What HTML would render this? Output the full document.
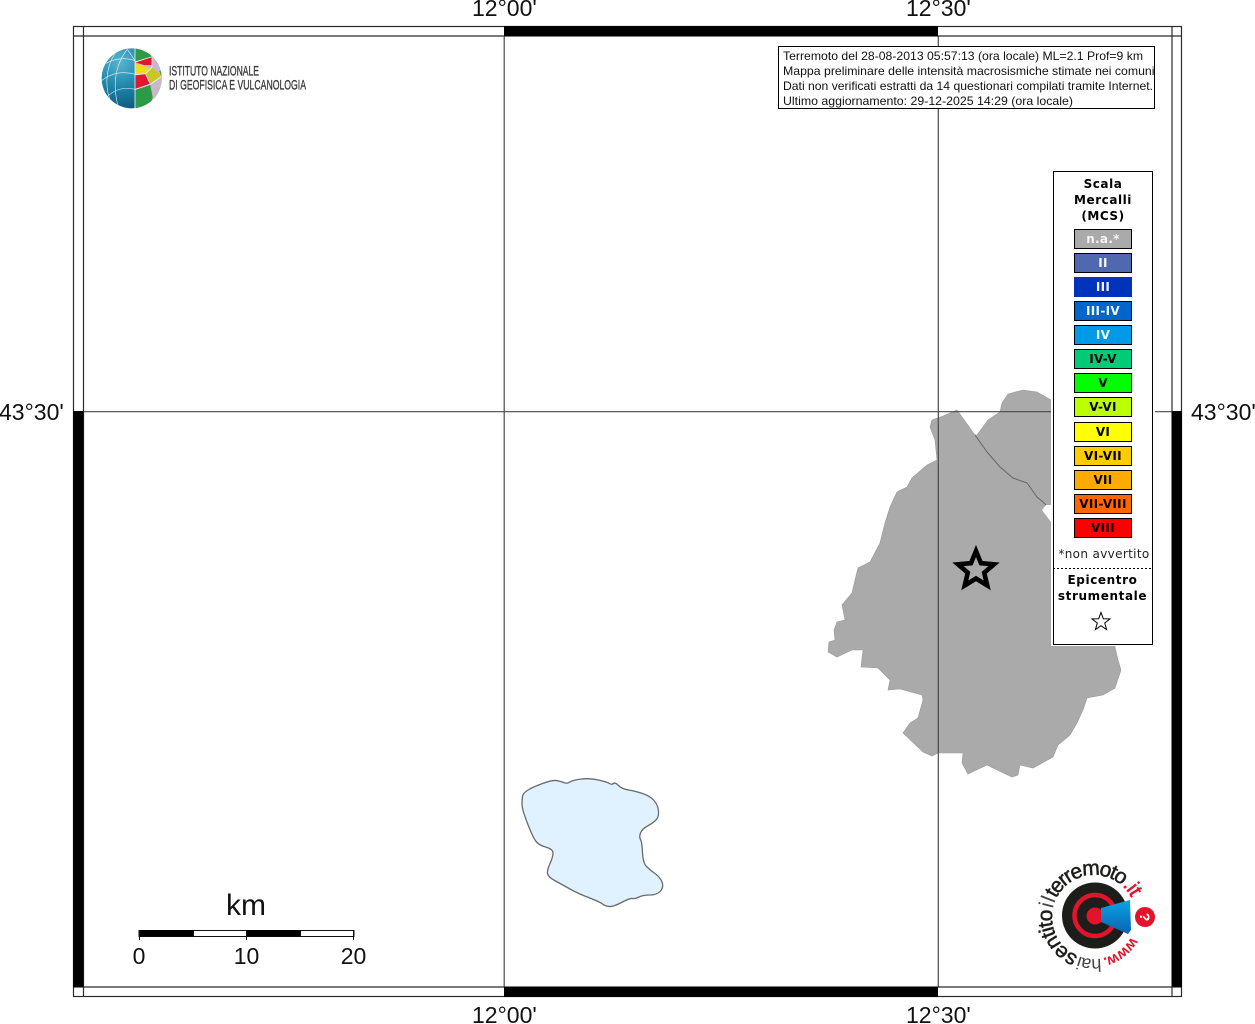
<!DOCTYPE html>
<html>
<head>
<meta charset="utf-8">
<title>Mappa intensità macrosismiche</title>
<style>
html,body{margin:0;padding:0;background:#fff;width:1255px;height:1024px;overflow:hidden}
svg{display:block}
.lab{font-family:"Liberation Sans",sans-serif;font-size:23px;fill:#111}
.box{font-family:"Liberation Sans",sans-serif;font-size:12px;fill:#111}
.leg{font-family:"DejaVu Sans",sans-serif;font-size:12px;font-weight:bold;fill:#000;text-anchor:middle;letter-spacing:.55px}
.sw{font-family:"DejaVu Sans",sans-serif;font-size:12px;font-weight:bold;text-anchor:middle;letter-spacing:.3px}
</style>
</head>
<body>
<svg width="1255" height="1024" viewBox="0 0 1255 1024" xmlns="http://www.w3.org/2000/svg">
<defs>
<radialGradient id="glb" cx="30%" cy="22%" r="85%">
<stop offset="0" stop-color="#5ab6d0"/><stop offset=".5" stop-color="#1f86aa"/><stop offset="1" stop-color="#0b5578"/>
</radialGradient>
<linearGradient id="cone" x1="0" y1="0" x2="0" y2="1">
<stop offset="0" stop-color="#0aa4e6"/><stop offset="1" stop-color="#0a62b2"/>
</linearGradient>
<clipPath id="gc"><circle cx="125" cy="115" r="90"/></clipPath>
<clipPath id="boxclip"><rect x="779" y="47" width="376" height="61"/></clipPath>
<path id="arc" d="M1136 917A42 42 0 1 1 1052 917A42 42 0 1 1 1136 917"/>
</defs>

<!-- regions -->
<path fill="#aaaaaa" stroke="#999" stroke-width=".6" d="M957 410L975 435L977 435L988 420L1000 412L1002 403L1008 394L1023 390L1037 392L1051 400L1060 410L1060 640L1115 640L1115 647L1118 660L1121 670L1115 688L1103 695L1087 698L1083 710L1077 723L1070 735L1058 745L1053 757L1033 768L1020 765L1018 775L1012 777L993 768L987 765L968 774L962 763L963 753L953 753L938 753L932 756L923 752L903 733L910 723L918 718L923 700L922 695L900 689L888 690L890 680L878 668L861 667L863 650L852 650L837 657L828 652L829 642L835 640L834 630L837 622L845 620L842 605L852 593L855 580L858 568L870 562L880 543L885 523L890 507L897 492L907 487L912 478L927 465L937 460L935 440L930 427L932 420L943 416Z"/>
<path fill="#fff" d="M1046 505L1042 510L1051 522L1056 522L1056 505Z"/>
<path fill="none" stroke="#666" stroke-width="1" d="M975 435L987 452L1000 467L1013 478L1027 483L1037 497L1043 502L1046 505"/>

<!-- lake -->
<path fill="#e0f2ff" stroke="#6a6a6a" stroke-width="1.300" stroke-linejoin="round" d="M522 803.500Q522 800 522.500 796.500Q523 793 528 790Q533 787 542.500 783.500Q552 780 556 780.500Q560 781 563.500 782.500Q567 784 570 782Q573 780 581.500 779Q590 778 598.500 780Q607 782 609.500 783.500Q612 785 613.500 783.500Q615 782 618.500 785.500Q622 789 628.500 790Q635 791 642.500 793.500Q650 796 654 800.500Q658 805 658.500 811Q659 817 656 820Q653 823 647.500 826Q642 829 640.500 833Q639 837 640.500 839.500Q642 842 642.500 852.500Q643 863 646.500 866.500Q650 870 655 873.500Q660 877 662 882Q664 887 660.500 891Q657 895 650 895Q643 895 639 897Q635 899 632.500 898.500Q630 898 621.500 902.500Q613 907 609 906.500Q605 906 602.500 904Q600 902 588.500 897.500Q577 893 570 889Q563 885 555.500 881Q548 877 547.500 873.500Q547 870 550 863.500Q553 857 553 853Q553 849 545.500 847Q538 845 535 840Q532 835 528.500 826Q525 817 523.500 812Q522 807 522 803.500Z"/>

<!-- grid -->
<g stroke="#4a4a4a" stroke-width="1.200" fill="none">
<path d="M504.200 36V987M938.300 36V987M83 411.700H1172"/>
</g>

<!-- frame -->
<g fill="none" stroke="#2a2a2a" stroke-width="1.200">
<rect x="73.500" y="26.500" width="1108" height="970"/>
<path d="M83.500 26V997M1172 26V997M73 36H1182M73 987H1182"/>
</g>
<g fill="#000">
<rect x="504" y="26" width="434" height="10"/>
<rect x="504" y="987" width="434" height="10"/>
<rect x="73" y="411" width="10.500" height="576"/>
<rect x="1172" y="411" width="10" height="576"/>
</g>

<!-- axis labels -->
<text class="lab" x="472" y="16">12°00'</text>
<text class="lab" x="906" y="16">12°30'</text>
<text class="lab" x="472" y="1023">12°00'</text>
<text class="lab" x="906" y="1023">12°30'</text>
<text class="lab" x="-1" y="420">43°30'</text>
<text class="lab" x="1191" y="420">43°30'</text>

<!-- epicentre star -->
<polygon points="976,551 981,563.200 994,564.300 984.200,572.700 987.200,585.400 976,578.500 964.800,585.400 967.800,572.700 958,564.300 971,563.200" fill="#aaaaaa" stroke="#000" stroke-width="4.600" stroke-linejoin="miter"/>

<!-- INGV logo -->
<g transform="translate(90 40) scale(.33333)">
<circle cx="125" cy="115" r="90" fill="url(#glb)"/>
<g clip-path="url(#gc)">
<path fill="#c9b8cc" d="M135 20H220V210H135Z"/>
<path fill="#2d9a45" d="M135 64L136 20L190 20L190 50Z"/>
<path fill="#e2162f" d="M136 67L186 51L187 75L162 75Z"/>
<path fill="#f0dc1e" d="M136 70L160 77L178 84L166 101L136 103Z"/>
<path fill="#c8c820" d="M166 100L186 82L216 108L184 130Z"/>
<path fill="#e2162f" d="M135 106L167 102L181 131L135 147Z"/>
<path fill="#2d9a45" d="M135 150L181 135L188 172L172 215L135 215Z"/>
<path fill="#2d9a45" d="M207 92L220 96L216 112Z"/>
</g>
<g fill="none" stroke="#e6f4f8" stroke-width="1.800" clip-path="url(#gc)">
<path d="M135 22V208" stroke-width="2.500"/>
<path d="M135 62C100 50 70 58 48 70"/>
<path d="M135 103C95 92 62 100 35 122"/>
<path d="M135 148C100 140 72 150 52 170"/>
<path d="M112 28C78 70 66 130 84 198"/>
<path d="M82 32C50 70 42 130 60 180"/>
<path d="M112 28L135 62"/>
</g>
<g fill="none" stroke="#fff" stroke-width="2" clip-path="url(#gc)">
<path d="M136 66L186 50M136 104L167 101L186 82M166 101L181 133L135 148M181 133L216 108M186 50L186 82"/>
</g>
</g>
<g font-family="Liberation Sans,sans-serif" font-size="14" fill="#3a3a3a" stroke="#3a3a3a" stroke-width=".35">
<text x="169" y="75.500" textLength="90" lengthAdjust="spacingAndGlyphs">ISTITUTO NAZIONALE</text>
<text x="169" y="89.500" textLength="137" lengthAdjust="spacingAndGlyphs">DI GEOFISICA E VULCANOLOGIA</text>
</g>

<!-- text box -->
<rect x="778.500" y="46.500" width="376" height="62" fill="#fff" stroke="#000" stroke-width="1"/>
<g clip-path="url(#boxclip)">
<text class="box" x="783" y="60" textLength="360" lengthAdjust="spacingAndGlyphs">Terremoto del 28-08-2013 05:57:13 (ora locale) ML=2.1 Prof=9 km</text>
<text class="box" x="783" y="75" textLength="371.500" lengthAdjust="spacingAndGlyphs">Mappa preliminare delle intensità macrosismiche stimate nei comuni</text>
<text class="box" x="783" y="90" textLength="370" lengthAdjust="spacingAndGlyphs">Dati non verificati estratti da 14 questionari compilati tramite Internet.</text>
<text class="box" x="783" y="105" textLength="290" lengthAdjust="spacingAndGlyphs">Ultimo aggiornamento: 29-12-2025 14:29 (ora locale)</text>
</g>

<!-- legend -->
<rect x="1051" y="170" width="104" height="476" fill="#fff"/>
<rect x="1053.500" y="171.500" width="99" height="473" fill="#fff" stroke="#000" stroke-width="1"/>
<text class="leg" x="1103" y="188">Scala</text>
<text class="leg" x="1103" y="204">Mercalli</text>
<text class="leg" x="1103" y="220">(MCS)</text>
<g stroke="#000" stroke-width="1">
<rect x="1074.500" y="229.500" width="57" height="19" fill="#aaaaaa"/>
<rect x="1074.500" y="253.500" width="57" height="19" fill="#5068b0"/>
<rect x="1074.500" y="277.500" width="57" height="19" fill="#0033bb" stroke="#0033bb"/>
<rect x="1074.500" y="301.500" width="57" height="19" fill="#0066cc"/>
<rect x="1074.500" y="325.500" width="57" height="19" fill="#0099e8"/>
<rect x="1074.500" y="349.500" width="57" height="19" fill="#00cc77"/>
<rect x="1074.500" y="373.500" width="57" height="19" fill="#00ff00"/>
<rect x="1074.500" y="397.500" width="57" height="19" fill="#bbff00"/>
<rect x="1074.500" y="422.500" width="57" height="19" fill="#ffff00"/>
<rect x="1074.500" y="446.500" width="57" height="19" fill="#ffcc00"/>
<rect x="1074.500" y="470.500" width="57" height="19" fill="#ffaa00"/>
<rect x="1074.500" y="494.500" width="57" height="19" fill="#ff6600"/>
<rect x="1074.500" y="518.500" width="57" height="19" fill="#ff0000"/>
</g>
<g>
<text class="sw" x="1103" y="243" fill="#f4f4f4">n.a.*</text>
<text class="sw" x="1103" y="267" fill="#f4f4f4">II</text>
<text class="sw" x="1103" y="291" fill="#f4f4f4">III</text>
<text class="sw" x="1103" y="315" fill="#f4f4f4">III-IV</text>
<text class="sw" x="1103" y="339" fill="#f4f4f4">IV</text>
<text class="sw" x="1103" y="363" fill="#000">IV-V</text>
<text class="sw" x="1103" y="387" fill="#000">V</text>
<text class="sw" x="1103" y="411" fill="#000">V-VI</text>
<text class="sw" x="1103" y="436" fill="#000">VI</text>
<text class="sw" x="1103" y="460" fill="#000">VI-VII</text>
<text class="sw" x="1103" y="484" fill="#000">VII</text>
<text class="sw" x="1103" y="508" fill="#000">VII-VIII</text>
<text class="sw" x="1103" y="532" fill="#000">VIII</text>
</g>
<text x="1104" y="558" text-anchor="middle" font-family="DejaVu Sans,sans-serif" font-size="12" letter-spacing=".35" fill="#222">*non avvertito</text>
<path d="M1053 568.500H1152" stroke="#000" stroke-width="1" stroke-dasharray="2 2"/>
<text class="leg" x="1102.500" y="584" style="letter-spacing:.6px">Epicentro</text>
<text class="leg" x="1102.500" y="600" style="letter-spacing:.6px">strumentale</text>
<polygon points="1101,612.500 1103.300,618.700 1110,618.900 1104.700,623 1106.600,629.500 1101,625.700 1095.400,629.500 1097.300,623 1092,618.900 1098.700,618.700" fill="#fff" stroke="#000" stroke-width="1"/>

<!-- scale bar -->
<text x="226" y="915" font-family="Liberation Sans,sans-serif" font-size="30" fill="#111">km</text>
<rect x="139" y="930.500" width="215" height="6" fill="#fff" stroke="#111" stroke-width="1"/>
<rect x="139" y="930" width="54" height="6.500" fill="#000"/>
<rect x="246" y="930" width="54" height="6.500" fill="#000"/>
<path d="M139.500 930V940M193.500 930V937M246.500 930V940M300.500 930V937M353.500 930V940" stroke="#111" stroke-width="1" fill="none"/>
<g font-family="Liberation Sans,sans-serif" font-size="23" fill="#111" text-anchor="middle">
<text x="139" y="964">0</text>
<text x="246.500" y="964">10</text>
<text x="353.500" y="964">20</text>
</g>

<!-- hai sentito logo -->
<circle cx="1095" cy="915.500" r="33" fill="#1d1d1b"/>
<circle cx="1095" cy="915.500" r="20.500" fill="none" stroke="#e2132a" stroke-width="4.500"/>
<circle cx="1095" cy="916" r="8.500" fill="#e2132a"/>
<path d="M1101 908L1130 900L1131 930L1128 934L1101 922Z" fill="url(#cone)"/>
<circle cx="1145" cy="917" r="10" fill="#e2132a"/>
<text x="1145" y="922" text-anchor="middle" font-family="Liberation Sans,sans-serif" font-size="14" font-weight="bold" fill="#fff" transform="rotate(90 1145 917)">?</text>
<g font-family="Liberation Sans,sans-serif" font-size="21" fill="#1d1d1b">
<text fill="#e2132a" font-weight="bold" font-size="15"><textPath href="#arc" startOffset="7.800%" textLength="36.500" lengthAdjust="spacing">www.</textPath></text>
<text font-size="18" fill="#444"><textPath href="#arc" startOffset="22.300%" textLength="22.500" lengthAdjust="spacing">hai</textPath></text>
<text stroke="#1d1d1b" stroke-width=".5"><textPath href="#arc" startOffset="31.100%" textLength="57" lengthAdjust="spacing">sentito</textPath></text>
<text fill="#444"><textPath href="#arc" startOffset="53.100%" textLength="10" lengthAdjust="spacing">il</textPath></text>
<text stroke="#1d1d1b" stroke-width=".5"><textPath href="#arc" startOffset="57.200%" textLength="77.500" lengthAdjust="spacing">terremoto</textPath></text>
<text fill="#e2132a" stroke="#e2132a" stroke-width=".5"><textPath href="#arc" startOffset="86.700%" textLength="15" lengthAdjust="spacing">.it</textPath></text>
</g>
</svg>
</body>
</html>
